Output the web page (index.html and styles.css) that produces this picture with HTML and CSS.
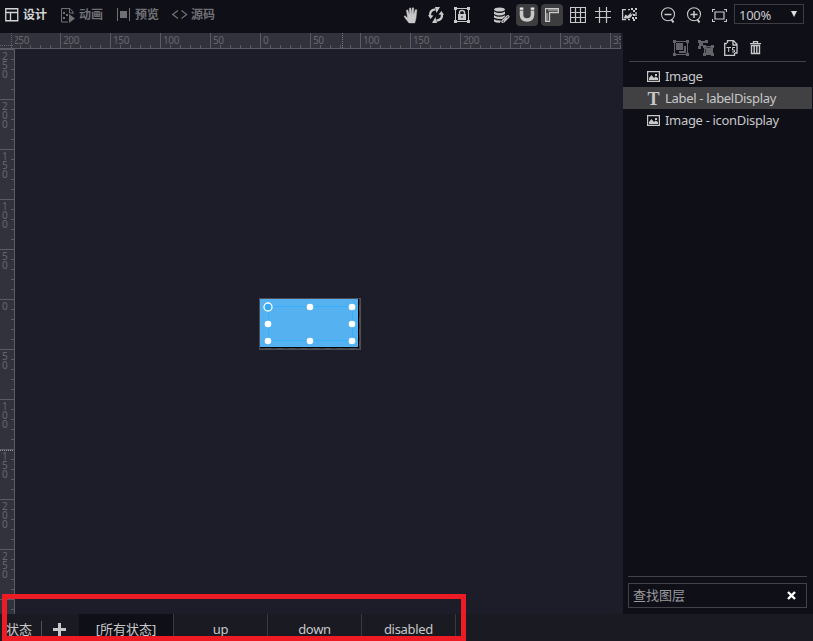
FILE: index.html
```
<!DOCTYPE html>
<html lang="zh-CN">
<head>
<meta charset="utf-8">
<title>Skin Editor</title>
<link rel="stylesheet" href="styles.css">
</head>
<body>
<div class="app">
  <header class="topbar">
    <nav class="modes">
      <div class="mode active"><svg width="14" height="14" viewBox="0 0 14 14"><path d="M.75.75h12v12h-12zM1 4.5h12M5.5 4.5V13" fill="none" stroke="currentColor" stroke-width="1.3"/></svg><span>设计</span></div>
      <div class="mode anim"><svg width="14" height="15" viewBox="0 0 14 15"><path d="M7 14H.5V.5H9L12 4v2M8.5.5V5H12" fill="none" stroke="currentColor"/><path d="M2 4h2v2H2zM5 6h2v2H5zM2 9h2v2H2zM8 6l6 4.5L8 15z" fill="currentColor"/></svg><span>动画</span></div>
      <div class="mode preview"><svg width="14" height="14" viewBox="0 0 14 14"><path d="M.5 0v13M12.5 0v13" stroke="currentColor"/><path d="M3 3h7v7H3z" fill="currentColor"/></svg><span>预览</span></div>
      <div class="mode source"><svg width="16" height="12" viewBox="0 0 16 12"><path d="M6 1.5.8 5.5 6 9.5M9.5 1.5l5.2 4-5.2 4" fill="none" stroke="currentColor" stroke-width="1.2"/></svg><span>源码</span></div>
    </nav>
    <div class="tools">
      <i class="tool hand"><svg width="16" height="18" viewBox="0 0 16 18"><path d="M6 17 2 12Q.2 9.4 2 9.7L4.6 12 3.4 4.6q.3-1.4 1.5-.4L6.4 9 6.2 2.5q1-1.5 1.8 0L8.3 9l.8-6.8q1.1-1.2 1.7.1L10.5 9l1.8-5.2q1.2-.9 1.6.3L13 12.5 11.8 17z" fill="currentColor" stroke="currentColor" stroke-width=".4"/></svg></i>
      <i class="tool refresh"><svg width="16" height="16" viewBox="0 0 16 16"><path d="M2.2 9.5Q1 3 7.5 2.4M13.800 6.500Q15 13 8.500 13.600" fill="none" stroke="currentColor" stroke-width="2.2"/><path d="M7 0h5L8.500 6zM9 16H4l3.500-6zM10.500 7.500 13.500 4 16 8zM5.500 8.500 2.500 12 0 8z" fill="currentColor"/></svg></i>
      <i class="tool lock"><svg width="16" height="16" viewBox="0 0 16 16"><path d="M1.500 1.500h13v13h-13z" fill="none" stroke="currentColor"/><path d="M0 0h3v3H0zM13 0h3v3h-3zM0 13h3v3H0zM13 13h3v3h-3zM4 7h8v6H4z" fill="currentColor"/><path d="M5.500 8V5.500q0-2 2.500-2t2.500 2V8" fill="none" stroke="currentColor" stroke-width="1.400"/><path d="M8 9v2" stroke="#0f0f18"/></svg></i>
      <i class="tool data"><svg width="17" height="17" viewBox="0 0 17 17"><ellipse cx="6.500" cy="2.500" rx="5.500" ry="2" fill="currentColor"/><path d="M1 4.500q5.500 3 11 0V7q-5.500 3-11 0zM1 8.300q5.500 3 11 0v1.200L9 12q-5 .2-8-1.200zM1 12.200q3 1.500 7 1.200l-1 2.400q-4 .2-6-1.200z" fill="currentColor"/><path d="m9 14 5-5q2-1 2 1l-5 5q-3 1-2-1zm2 0 3-3" fill="none" stroke="currentColor" stroke-width="1.200"/></svg></i>
      <i class="tool chosen magnet"><svg width="16" height="16" viewBox="0 0 16 16"><path d="M2.500 3.500v4.500Q2.800 13 8 13t5.500-5V3.500" fill="none" stroke="currentColor" stroke-width="3.600"/><path d="M.7.500h3.600v2.200H.7zM11.700.500h3.600v2.200h-3.600z" fill="#eee"/></svg></i>
      <i class="tool chosen rule"><svg width="14" height="14" viewBox="0 0 14 14"><path d="M.5.500h13v4h-9v9h-4z" fill="none" stroke="currentColor" stroke-width="1.300"/><path d="M4 1v2M6 1v2M8 1v2M10 1v2M12 1v2M1 6h2M1 8h2M1 10h2M1 12h2" stroke="currentColor"/></svg></i>
      <i class="tool grid"><svg width="16" height="16" viewBox="0 0 16 16"><path d="M.5.500h15v15H.500zM5.500 0v16M10.500 0v16M0 5.500h16M0 10.500h16" fill="none" stroke="currentColor" stroke-width="1.200"/></svg></i>
      <i class="tool hash"><svg width="16" height="16" viewBox="0 0 16 16"><path d="M4.500 0v16M11.500 0v16M0 4.500h16M0 10.500h16" stroke="currentColor" stroke-width="1.200"/></svg></i>
      <i class="tool picture"><svg width="17" height="16" viewBox="0 0 17 16"><path d="M5 2.600H1.600v10H5M7 2.600h2M7 12.600h2M15 5v4" fill="none" stroke="currentColor" stroke-width="1.300"/><path d="m2.500 11.500 2-4 2 1.500 4-4-1 3 3-2-2.500 4-2 1.500zM10 1h2v2h-2zM14 1h2v2h-2zM12 3h2v2h-2zM12 7h2v2h-2zM11 10h2v2h-2zM14 10h2v2h-2zM12 12h2v2h-2z" fill="currentColor"/></svg></i>
      <i class="tool out"><svg width="16" height="16" viewBox="0 0 16 16"><circle cx="8" cy="7.300" r="6.500" fill="none" stroke="currentColor" stroke-width="1.100"/><path d="M4.500 7.500h7" stroke="currentColor" stroke-width="1.500"/><path d="m11.500 12.500 2 3" stroke="currentColor" stroke-width="2"/></svg></i>
      <i class="tool in"><svg width="16" height="16" viewBox="0 0 16 16"><circle cx="8" cy="7.300" r="6.500" fill="none" stroke="currentColor" stroke-width="1.100"/><path d="M4.500 7.500h7M8 4v7" stroke="currentColor" stroke-width="1.500"/><path d="m11.500 12.500 2 3" stroke="currentColor" stroke-width="2"/></svg></i>
      <i class="tool fit"><svg width="15" height="13" viewBox="0 0 15 13"><path d="M3 3h9v7H3zM.500 3V.500H3M12 .500h2.500V3M.500 10v2.500H3M12 12.500h2.500V10" fill="none" stroke="currentColor" stroke-width="1.200"/></svg></i>
      <div class="zoom"><span>100%</span><b></b></div>
    </div>
  </header>

  <div class="work">
    <main class="stage">
      <div class="ruler-x">
        <div class="corner"></div>
        <div class="labels-x"><span class="clipped"><em>250</em></span><span>200</span><span>150</span><span>100</span><span>50</span><span>0</span><span class="cursor-x">50</span><span>100</span><span>150</span><span>200</span><span>250</span><span>300</span><span>350</span></div>
      </div>
      <div class="below">
        <div class="ruler-y"><span>250</span><span>200</span><span>150</span><span>100</span><span>50</span><span>0</span><span>50</span><span>100</span><span class="cursor-y">150</span><span>200</span><span>250</span><span></span></div>
        <div class="canvas">
          <div class="component">
            <svg width="102" height="52" viewBox="0 0 102 52"><path fill="#4d4d54" d="M0 0h102v52H0z"/><path d="M1 1h99v49H1z" fill="#000"/><path d="M100.500 1v49.500H1" fill="none" stroke="#3b3b42" stroke-dasharray="6 6"/><path d="M1 1h98v48H1z" fill="#55b1ef"/><path d="M9.500 8.500h84v34h-84z" fill="none" stroke="#35b1fc"/><g fill="#fff"><circle cx="51" cy="9" r="3.300"/><circle cx="93" cy="9" r="3.300"/><circle cx="9" cy="26" r="3.300"/><circle cx="93" cy="26" r="3.300"/><circle cx="9" cy="43" r="3.300"/><circle cx="51" cy="43" r="3.300"/><circle cx="93" cy="43" r="3.300"/></g><circle cx="9" cy="9" r="4" fill="#35a9f2" stroke="#fff" stroke-width="1.300"/></svg>
          </div>
        </div>
      </div>
    </main>

    <aside class="layers">
      <div class="actions">
        <svg class="dim" width="16" height="16" viewBox="0 0 16 16"><path d="M1.500 1.500h13v13h-13z" fill="none" stroke="currentColor"/><path d="M0 0h3v3H0zM13 0h3v3h-3zM0 13h3v3H0zM13 13h3v3h-3zM3 3h7v7H3zM11 6h2v7H6v-2h5z" fill="currentColor"/></svg>
        <svg class="dim ungroup" width="16" height="16" viewBox="0 0 16 16"><path d="M0 0h3v1h4V0h3v3H5v3H3v3H0V6h1V3H0zM5 5h3v1h5V5h3v3h-1v5h1v3h-3v-1H8v1H5v-3h1V8H5z" fill="currentColor"/><path d="M8.500 7.500h4M7.500 9v4" stroke="#0f0f18" stroke-width=".6"/></svg>
        <svg class="script" width="14" height="16" viewBox="0 0 14 16"><path d="M3.500 3V.700h6l3.500 3.500V13h-2M3 3.500H.700v11.800h9.800V13M9 1v4h4" fill="none" stroke="currentColor" stroke-width="1.300"/><path d="M2.500 7.500H7M4.700 7.500V12M11 7.500H8.500V10h2v2H8" fill="none" stroke="currentColor"/></svg>
        <svg class="trash" width="12" height="14" viewBox="0 0 12 14"><path d="M0 2.700h11M3.500 2.500V.600h4v2" fill="none" stroke="currentColor" stroke-width="1.300"/><path d="M1.500 4.500h8v8h-8zM4.200 5v7M6.800 5v7" fill="none" stroke="currentColor" stroke-width="1.400"/></svg>
      </div>
      <ul class="tree">
        <li><svg width="13" height="11" viewBox="0 0 13 11"><path d="M.6.600h11.800v9.800H.600z" fill="none" stroke="currentColor" stroke-width="1.200"/><path d="M2 9V7l2.500-3L7 7l1.500-1.500L11 7v2zM8 3h2v2H8z" fill="currentColor"/></svg><span>Image</span></li>
        <li class="selected"><b class="letter">T</b><span>Label - labelDisplay</span></li>
        <li><svg width="13" height="11" viewBox="0 0 13 11"><path d="M.6.600h11.800v9.800H.600z" fill="none" stroke="currentColor" stroke-width="1.200"/><path d="M2 9V7l2.500-3L7 7l1.500-1.500L11 7v2zM8 3h2v2H8z" fill="currentColor"/></svg><span>Image - iconDisplay</span></li>
      </ul>
      <div class="search-area"><div class="search"><span>查找图层</span><svg width="9" height="9" viewBox="0 0 9 9"><path d="m1 1 7 7m0-7L1 8" stroke="#fff" stroke-width="2.400"/></svg></div></div>
    </aside>
  </div>

  <footer class="states">
    <span class="caption">状态</span>
    <span class="add"><svg width="13" height="13" viewBox="0 0 13 13"><path d="M6.500 0v13M0 6.500h13" stroke="currentColor" stroke-width="3"/></svg></span>
    <span class="state active">[所有状态]</span><span class="state">up</span><span class="state">down</span><span class="state">disabled</span>
  </footer>
  <div class="highlight"></div>
</div>
</body>
</html>
```
FILE: styles.css
```
* { box-sizing: border-box; }
body {
  margin: 0;
  background: #0f0f18;
  color: #c8c8c8;
  font: 13px/18px "Noto Sans", "Noto Sans CJK SC", sans-serif;
}
svg { display: block; flex: none; }
.app {
  position: relative;
  width: 813px;
  height: 641px;
  overflow: hidden;
  display: flex;
  flex-direction: column;
}

.topbar { height: 33px; flex: none; display: flex; justify-content: space-between; padding-right: 9px; }
.modes { display: flex; height: 30px; padding-left: 5px; }
.mode {
  display: flex;
  align-items: center;
  gap: 4px;
  color: #707074;
  font-size: 12px;
  font-weight: bold;
}
.mode.active { color: #d4d4d4; }
.mode.anim { margin-left: 14px; }
.mode.preview { margin-left: 14px; }
.mode.source { margin-left: 13px; gap: 3px; }

.tools { display: flex; align-items: center; height: 30px; }
.tool {
  width: 22px;
  height: 22px;
  margin-right: 3px;
  display: flex;
  align-items: center;
  justify-content: center;
  border-radius: 4px;
}
.tool.refresh, .tool.out { margin-right: 4px; }
.tool.lock { margin-right: 17px; }
.tool.data { margin-right: 4px; }
.tool.rule, .tool.hash { margin-right: 4px; }
.tool.picture { margin-right: 17px; }
.tool.fit { margin-right: 4px; }
.tool.chosen { background: #3d3d3f; }
.zoom {
  width: 70px;
  height: 20px;
  margin-top: -2px;
  padding: 2px 6px 0 4px;
  border: 1px solid #3c3c42;
  display: flex;
  align-items: center;
  justify-content: space-between;
  letter-spacing: -.25px;
}
.zoom b { margin-top: -3px; border: solid transparent; border-width: 6px 3.5px 0; border-top-color: #ddd; }

.work { height: 581px; flex: none; display: flex; }
.stage { width: 623px; background: #1d1c29; }
.ruler-x {
  width: 621px;
  height: 16px;
  display: flex;
  background: #32323d;
  border-bottom: 1px solid #5b5b64;
  color: #66666b;
  font-size: 10px;
  line-height: 14px;
  overflow: hidden;
}
.corner {
  width: 15px;
  height: 16px;
  flex: none;
  background:
    repeating-linear-gradient(#66666e 0 1px, transparent 1px 2px) 11px 0 / 1px 16px no-repeat,
    repeating-linear-gradient(90deg, #66666e 0 1px, transparent 1px 2px) 0 12px / 14px 1px no-repeat;
}
.labels-x {
  flex: 1;
  display: flex;
  overflow: hidden;
  background: repeating-linear-gradient(90deg, transparent 0 5px, #5b5b64 5px 6px, transparent 6px 10px) 0 12px / 100% 3px no-repeat;
}
.labels-x span { width: 50px; flex: none; padding-left: 2px; border-left: 1px solid #5b5b64; white-space: nowrap; letter-spacing: -.35px; }
.labels-x .clipped { width: 45px; border: 0; padding: 0; overflow: hidden; }
.clipped em { font-style: normal; margin-left: -2px; }
.cursor-x { background: repeating-linear-gradient(#77777d 0 1px, transparent 1px 2px) 31px 0 / 1px 16px no-repeat; }
.below { display: flex; height: 565px; }
.ruler-y {
  width: 15px;
  flex: none;
  overflow: hidden;
  border-right: 1px solid #5b5b64;
  color: #66666b;
  font-size: 10px;
  line-height: 9px;
  background: repeating-linear-gradient(#5b5b64 0 1px, transparent 1px 10px) 11px 0 / 3px 100% no-repeat #32323d;
}
.ruler-y span { display: block; height: 50px; padding: 2px 6px 0 2px; border-top: 1px solid #5b5b64; word-break: break-all; }
.cursor-y { background: repeating-linear-gradient(90deg, #999 0 1px, transparent 1px 2px) 0 0 / 14px 1px no-repeat; }
.canvas { flex: 1; padding: 249px 0 0 244px; }
.component { width: 102px; }

.layers { flex: 1; display: flex; flex-direction: column; }
.actions {
  display: flex;
  align-items: center;
  height: 29px;
  margin: 0 7px 0 6px;
  padding: 2px 0 0 44px;
  border-bottom: 1px solid #414147;
}
.actions .ungroup { margin-left: 9px; }
.actions .script { margin-left: 10px; }
.actions .trash { margin-left: 12px; }
.dim { color: #626268; }
.tree { list-style: none; margin: 3px 1px 0 0; padding: 0; letter-spacing: -.32px; }
.tree li { height: 22px; display: flex; align-items: center; padding-left: 24px; gap: 5px; }
.tree .selected { background: #414144; }
.letter { width: 13px; text-align: center; font: bold 18px/20px "Liberation Serif", serif; padding-top: 1px; letter-spacing: 0; }
.search-area { margin: auto 6px 6px 5px; padding-top: 6px; border-top: 1px solid #414147; }
.search {
  height: 25px;
  border: 1px solid #414147;
  display: flex;
  align-items: center;
  justify-content: space-between;
  padding: 0 10px 0 4px;
  color: #99999d;
}
.search span { margin-top: -2px; }

.states { height: 27px; flex: none; display: flex; background: #1a1a23; line-height: 30px; overflow: hidden; }
.caption { width: 42px; height: 20px; margin-top: 7px; padding-left: 6px; line-height: 16px; border-right: 1px solid #505057; }
.add { width: 37px; padding: 9px 0 0 11px; }
.state { width: 94px; text-align: center; border-right: 1px solid #3a3a42; letter-spacing: -.3px; }
.state.active { width: 95px; background: #0f0f18; letter-spacing: 0; }
.highlight { position: absolute; left: 2px; top: 594px; width: 464px; height: 47px; border: 5px solid #ed1c24; }
```
